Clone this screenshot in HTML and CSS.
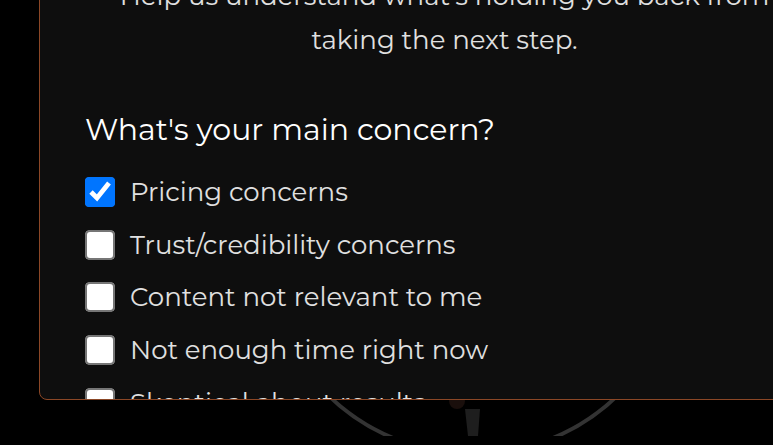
FILE: index.html
```
<!DOCTYPE html>
<html lang="en">
<head>
<meta charset="utf-8">
<meta name="viewport" content="width=device-width, initial-scale=1">
<title>Feedback</title>
<link rel="stylesheet" href="styles.css">
</head>
<body>
<div class="page">
  <svg class="backdrop" viewBox="0 0 424 76" aria-hidden="true">
    <circle cx="212" cy="-114" r="208" fill="none" stroke="#333" stroke-width="4"/>
    <circle cx="196" cy="41" r="8" fill="#1a0f0c"/>
    <path d="M204 49h15l-2 27h-10z" fill="#1e1e1e"/>
  </svg>
  <main class="dialog">
    <form class="survey">
      <p class="intro">Help us understand what's holding you back from<br>taking the next step.</p>
      <fieldset class="question">
        <legend class="title">What's your main concern?</legend>
        <div class="options">
          <label class="option"><input type="checkbox" checked><span>Pricing concerns</span></label>
          <label class="option"><input type="checkbox"><span>Trust/credibility concerns</span></label>
          <label class="option"><input type="checkbox"><span>Content not relevant to me</span></label>
          <label class="option"><input type="checkbox"><span>Not enough time right now</span></label>
          <label class="option"><input type="checkbox"><span>Skeptical about results</span></label>
        </div>
      </fieldset>
    </form>
  </main>
</div>
</body>
</html>
```
FILE: styles.css
```
* {
  box-sizing: border-box;
}

body {
  margin: 0;
  background: #000;
  color: #e0e0e0;
  font-family: Montserrat, Inter, sans-serif;
  font-size: 26px;
}

.page {
  position: relative;
  display: flex;
  height: 100vh;
  padding: 0 0 45px 39px;
  overflow: hidden;
}

.backdrop {
  position: absolute;
  left: 261px;
  bottom: 9px;
  width: 424px;
  height: 76px;
  overflow: hidden;
}

/* The dialog runs past the top and right edges of the window. */
.dialog {
  position: relative;
  flex: 1 0 auto;
  width: calc(100% + 77px);
  margin-top: -27px;
  padding: 0 45px;
  overflow: hidden;
  background: #0e0e0e;
  border: 1px solid #8b4726;
  border-radius: 8px;
}

.intro {
  margin: 0;
  line-height: 44px;
  text-align: center;
  white-space: nowrap;
}

.question {
  margin: 46px 0 0;
  padding: 0;
  border: 0;
}

.title {
  padding: 0;
  color: #fff;
  font-size: 30px;
  line-height: 44px;
}

.options {
  display: grid;
  grid-template-rows: repeat(5, 1fr);
  height: 263px;
  margin-top: 14px;
}

.option {
  display: flex;
  align-items: center;
  gap: 15px;
}

.option input {
  flex: none;
  width: 15px;
  height: 15px;
  margin: 0;
  zoom: 2;
}
```
